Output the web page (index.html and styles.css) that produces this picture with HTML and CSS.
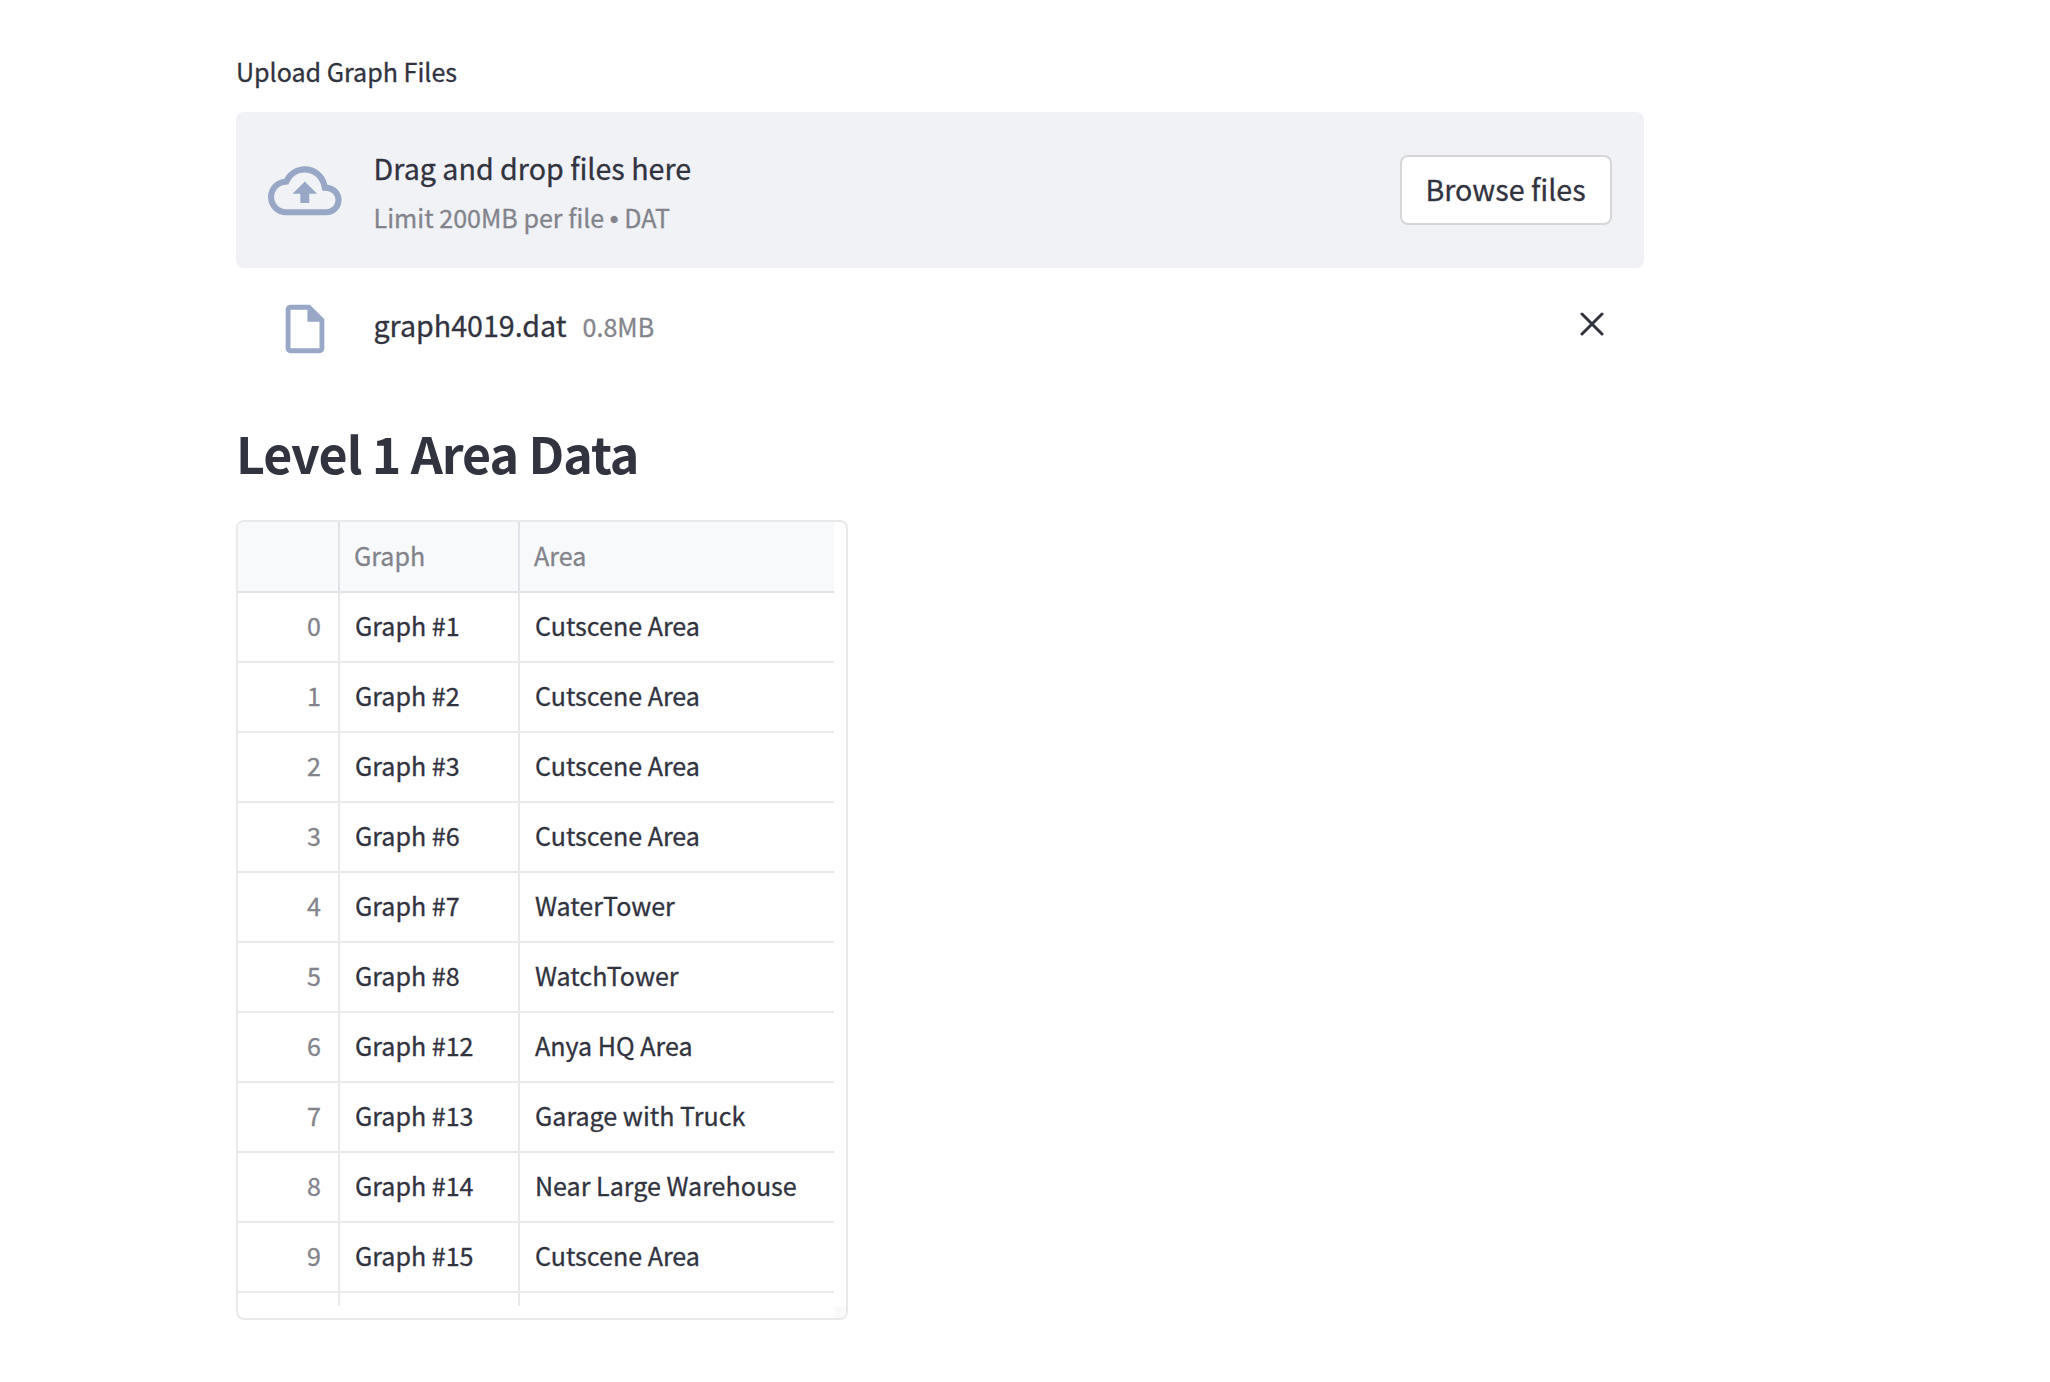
FILE: index.html
```
<!DOCTYPE html>
<html lang="en">
<head>
<meta charset="utf-8">
<title>Graph Files</title>
<link rel="stylesheet" href="styles.css">
</head>
<body>
<main class="page">
  <label class="upload-label">Upload Graph Files</label>
  <section class="dropzone">
    <svg class="cloud-icon" viewBox="0 0 24 24"><path d="M19.35 10.04A7.49 7.49 0 0 0 12 4C9.11 4 6.6 5.64 5.35 8.04A5.994 5.994 0 0 0 0 14c0 3.31 2.69 6 6 6h13c2.76 0 5-2.24 5-5 0-2.64-2.05-4.78-4.65-4.96zM19 18H6c-2.21 0-4-1.79-4-4 0-2.05 1.53-3.76 3.56-3.97l1.07-.11.5-.95A5.469 5.469 0 0 1 12 6c2.62 0 4.88 1.86 5.39 4.43l.3 1.5 1.53.11A2.98 2.98 0 0 1 22 15c0 1.65-1.35 3-3 3zM8 13h2.55v3h2.9v-3H16l-4-4z"/></svg>
    <div class="instructions">
      <span class="instructions-title">Drag and drop files here</span>
      <span class="instructions-limit">Limit 200MB per file <span class="bullet">•</span> DAT</span>
    </div>
    <button class="browse">Browse files</button>
  </section>
  <div class="file">
    <svg class="file-icon" viewBox="0 0 24 24"><path d="M14 2H6c-1.1 0-1.99.9-1.99 2L4 20c0 1.1.89 2 1.99 2H18c1.1 0 2-.9 2-2V8l-6-6zM6 20V4h7v5h5v11H6z"/></svg>
    <span class="file-name">graph4019.dat</span>
    <span class="file-size">0.8MB</span>
    <svg class="close-icon" viewBox="0 0 24 24"><path d="M2 2l20 20M22 2L2 22"/></svg>
  </div>
  <h3 class="heading">Level 1 Area Data</h3>
  <div class="frame">
    <div class="grid">
      <div class="row head"><span></span><span>Graph</span><span>Area</span></div>
      <div class="row"><span>0</span><span>Graph #1</span><span>Cutscene Area</span></div>
      <div class="row"><span>1</span><span>Graph #2</span><span>Cutscene Area</span></div>
      <div class="row"><span>2</span><span>Graph #3</span><span>Cutscene Area</span></div>
      <div class="row"><span>3</span><span>Graph #6</span><span>Cutscene Area</span></div>
      <div class="row"><span>4</span><span>Graph #7</span><span>WaterTower</span></div>
      <div class="row"><span>5</span><span>Graph #8</span><span>WatchTower</span></div>
      <div class="row"><span>6</span><span>Graph #12</span><span>Anya HQ Area</span></div>
      <div class="row"><span>7</span><span>Graph #13</span><span>Garage with Truck</span></div>
      <div class="row"><span>8</span><span>Graph #14</span><span>Near Large Warehouse</span></div>
      <div class="row"><span>9</span><span>Graph #15</span><span>Cutscene Area</span></div>
      <div class="row partial"><span></span><span></span><span></span></div>
    </div>
    <div class="corner"></div>
  </div>
</main>
</body>
</html>
```
FILE: styles.css
```
* { box-sizing: border-box; }

body {
  margin: 0;
  background: #fff;
  color: #31333f;
  font-family: "Noto Sans CJK SC", "Noto Sans", sans-serif;
  font-size: 25.07px;
  -webkit-text-stroke: 0.3px currentColor;
}

.page {
  width: 1408px;
  margin-left: 236px;
  padding-top: 50px;
}

.upload-label {
  display: block;
  line-height: 42px;
  margin-bottom: 20px;
}

.dropzone {
  display: flex;
  align-items: center;
  height: 156px;
  padding: 0 32px;
  border-radius: 8px;
  background: #f0f2f6;
}

.cloud-icon {
  width: 73.6px;
  height: 73.6px;
  margin: 1px 32px 0 0;
  fill: #98a7c6;
}

.instructions {
  display: flex;
  flex-direction: column;
  padding-top: 3px;
}

.instructions-title {
  font-size: 28.65px;
  line-height: 51px;
}

.instructions-limit {
  line-height: 48px;
  color: #83848b;
}

.bullet {
  font-family: "Liberation Sans", sans-serif;
  line-height: 1;
}

.browse {
  width: 212px;
  height: 70px;
  margin-left: auto;
  padding: 0 1px 2px 0;
  border: 2px solid #d6d6d9;
  border-radius: 8px;
  background: #fff;
  color: inherit;
  font: inherit;
  font-size: 28.65px;
  line-height: 60px;
}

.file {
  display: flex;
  align-items: center;
  height: 122px;
  padding: 0 40px;
}

.file-icon {
  width: 58px;
  height: 58px;
  margin-right: 39.4px;
  fill: #98a7c6;
}

.file-name {
  margin: 0 16px 8px 0;
  font-size: 28.65px;
  line-height: 42px;
}

.file-size {
  margin-bottom: 7px;
  line-height: 42px;
  color: #83848b;
}

.close-icon {
  width: 24px;
  height: 24px;
  margin: 0 0 10px auto;
  fill: none;
  stroke: #31333f;
  stroke-width: 3;
  stroke-linecap: round;
}

.heading {
  margin: 22px 0 28px;
  font-size: 50.1px;
  font-weight: 600;
  line-height: 80px;
  letter-spacing: -1px;
  -webkit-text-stroke: 0;
}

.frame {
  display: grid;
  grid-template-columns: 596px 12px;
  grid-template-rows: 784px 12px;
  width: 612px;
  border: 2px solid #e9e9ea;
  border-radius: 8px;
  overflow: hidden;
}

.corner {
  grid-area: 2 / 2;
  background: #fafafa;
}

.row {
  display: grid;
  grid-template-columns: 102px 180px 1fr;
  height: 70px;
  border-bottom: 2px solid #e9e9ea;
  line-height: 64px;
  white-space: nowrap;
}

.row span {
  padding-left: 15px;
  border-right: 2px solid #e9e9ea;
}

.row span:first-child {
  padding: 0 17px 0 0;
  color: #83848b;
  text-align: right;
}

.row span:last-child {
  border-right: 0;
}

.row.head {
  height: 71px;
  border-color: #e2e2e8;
  background: #f8f9fb;
  color: #83848b;
  line-height: 67px;
}

.row.head span {
  padding-left: 14px;
  border-color: #e2e2e8;
}

.row.partial {
  height: 13px;
  border-bottom: 0;
}
```
